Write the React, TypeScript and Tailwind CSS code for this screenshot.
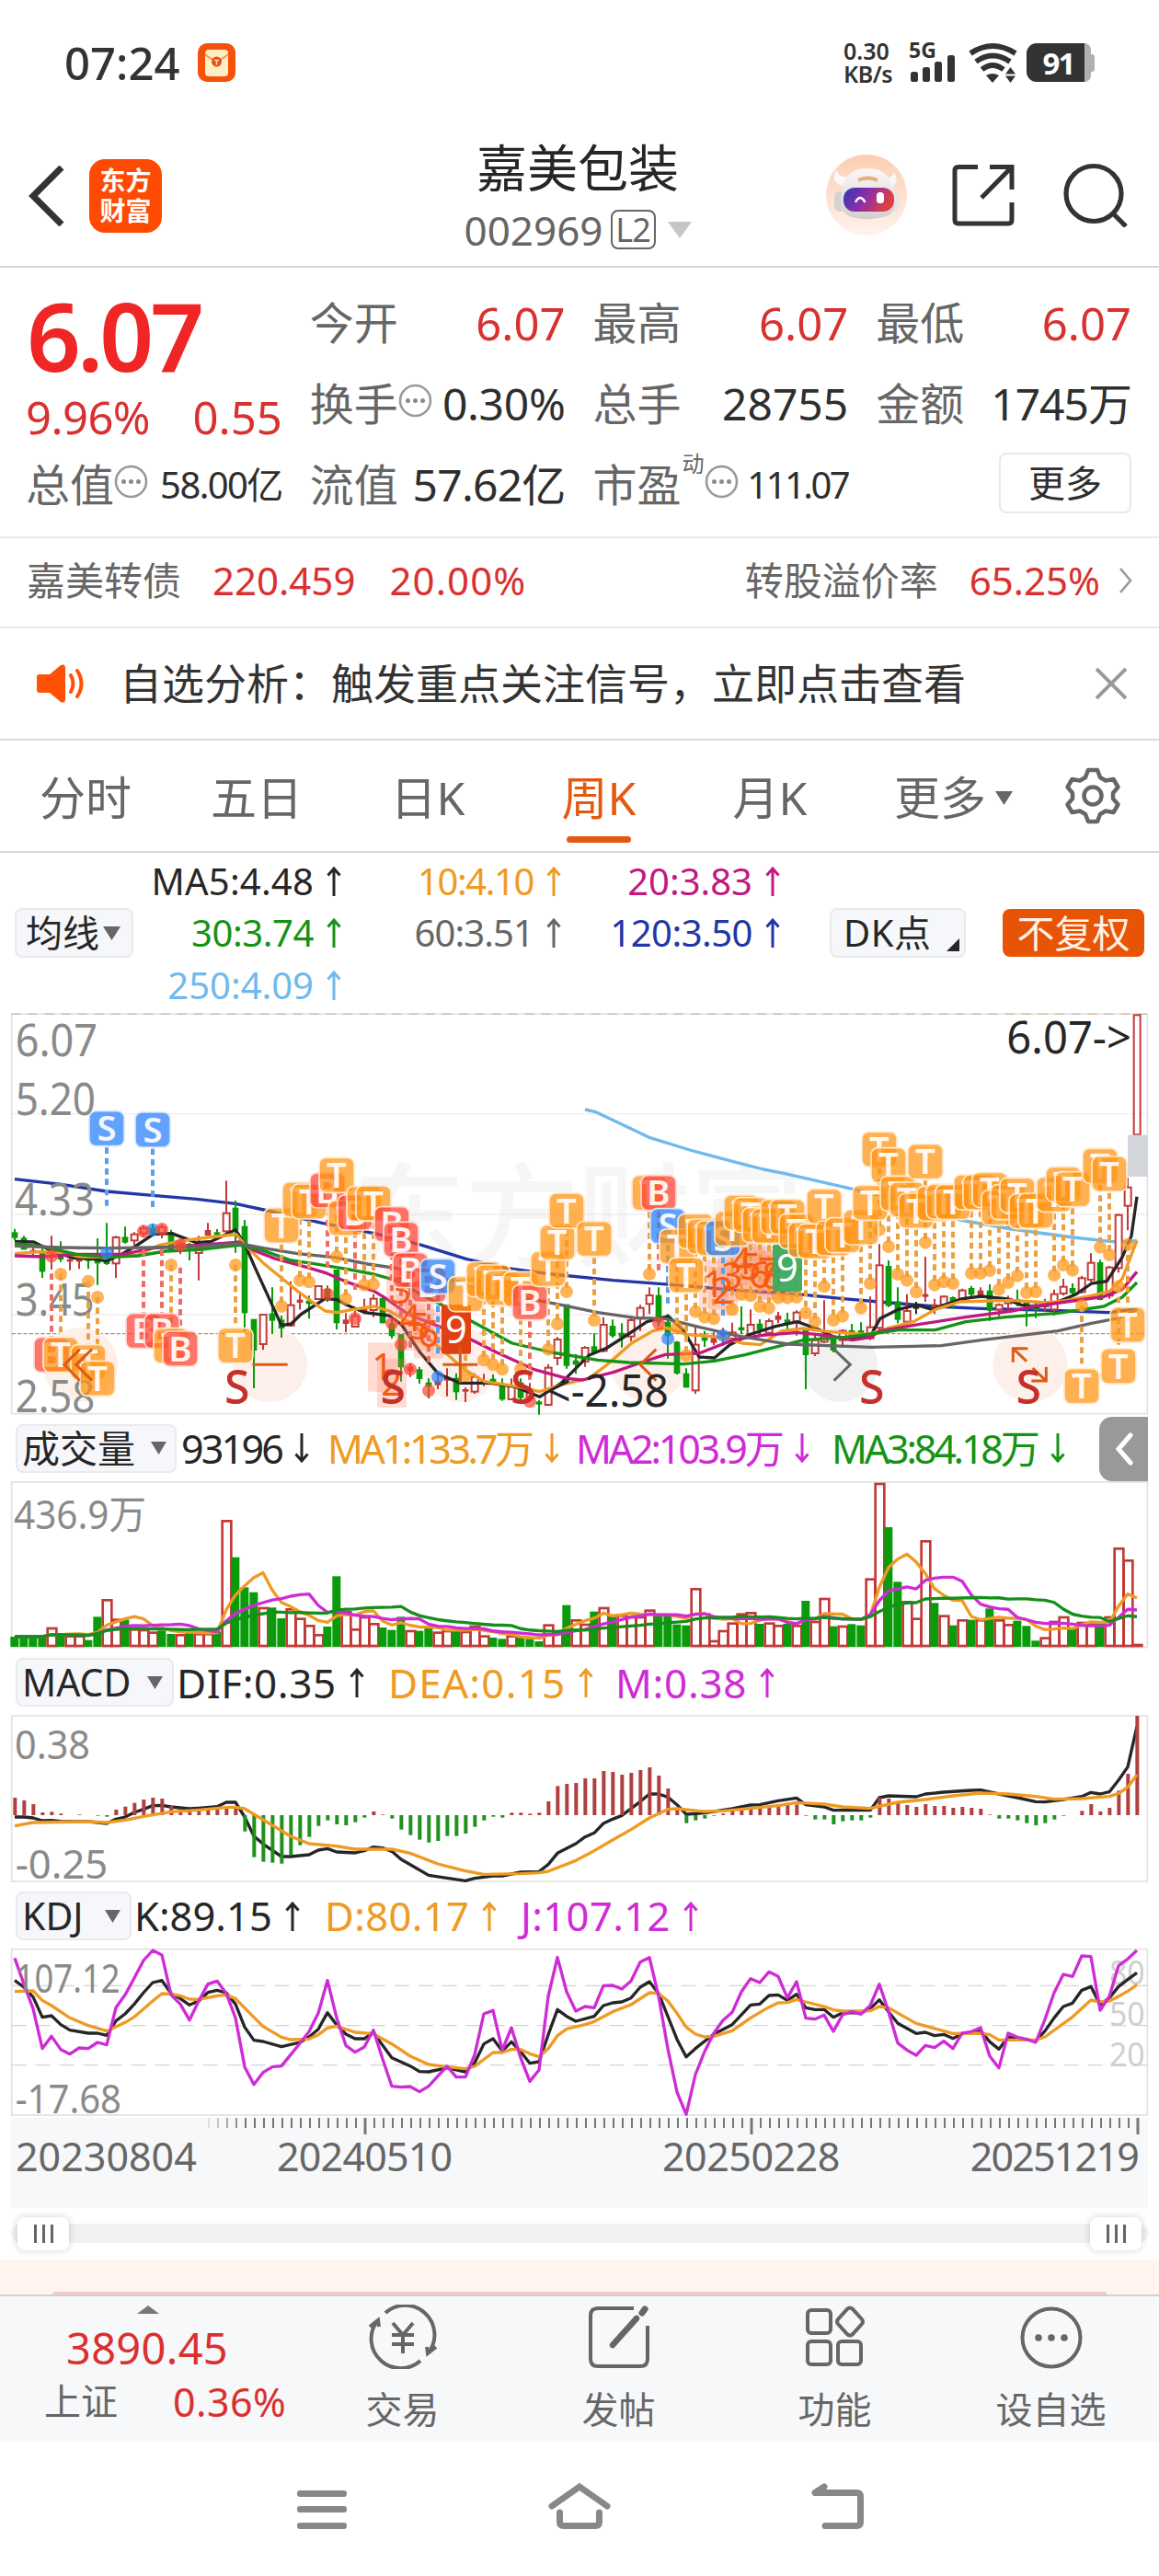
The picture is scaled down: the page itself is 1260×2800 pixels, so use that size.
import type { ReactNode } from "react";
import clsx from "clsx";

type Pt = [number, number];

// Every chart uses 3 units per pixel; one candle is 30 units wide.
const X0 = 48;
const STEP = 30;
const at = (i: number) => X0 + STEP * i;

const RED = "#c23a37";
const GREEN = "#0a9b0a";
const INK = "#262626";
const ORANGE = "#ef9a22";
const PURPLE = "#cf2bd6";

// [high, low, body top, body bottom, colour]
type Candle = [number, number, number, number, string];

const candles: Candle[] = [
  [737, 775, 750, 765, "g"], [760, 805, 768, 803, "g"], [790, 830, 808, 812, "r"], [800, 897, 815, 875, "g"],
  [760, 870, 805, 815, "r"], [778, 845, 820, 835, "g"], [828, 872, 838, 842, "r"], [828, 868, 838, 842, "r"],
  [825, 868, 833, 840, "g"], [768, 920, 835, 848, "g"], [718, 855, 840, 850, "g"], [760, 897, 765, 850, "r"],
  [730, 785, 765, 780, "g"], [748, 790, 755, 775, "r"], [725, 765, 735, 752, "r"], [720, 762, 735, 750, "g"],
  [722, 768, 732, 752, "r"], [740, 812, 750, 810, "g"], [770, 820, 785, 800, "r"], [783, 840, 788, 800, "g"],
  [760, 905, 800, 816, "r"], [718, 760, 743, 757, "r"], [738, 770, 750, 756, "g"], [580, 750, 686, 745, "r"],
  [645, 815, 670, 740, "g"], [708, 1072, 730, 1010, "g"], [1033, 1257, 1033, 1132, "g"], [1015, 1132, 1017, 1113, "r"],
  [928, 1080, 1015, 1035, "g"], [1020, 1092, 1035, 1060, "g"], [908, 1056, 986, 1052, "r"], [950, 1000, 970, 976, "r"],
  [955, 1030, 973, 980, "g"], [922, 968, 924, 966, "r"], [922, 975, 935, 960, "g"], [870, 1065, 872, 1043, "g"],
  [1012, 1074, 1035, 1045, "r"], [1005, 1058, 1022, 1056, "r"], [965, 1015, 1000, 1006, "r"], [950, 1025, 965, 1002, "r"],
  [960, 1045, 965, 1043, "g"], [1030, 1095, 1048, 1085, "g"], [1080, 1235, 1083, 1187, "g"], [1175, 1220, 1188, 1200, "r"],
  [1187, 1242, 1197, 1225, "g"], [1225, 1290, 1240, 1250, "g"], [1205, 1260, 1235, 1245, "r"], [1192, 1283, 1222, 1230, "r"],
  [1208, 1295, 1225, 1268, "g"], [1255, 1302, 1262, 1266, "r"], [1208, 1275, 1220, 1268, "r"], [1210, 1250, 1235, 1240, "r"],
  [1212, 1245, 1228, 1236, "g"], [1225, 1298, 1245, 1292, "g"], [1225, 1295, 1248, 1293, "r"], [1225, 1295, 1240, 1287, "g"],
  [1240, 1300, 1262, 1290, "r"], [1295, 1343, 1302, 1308, "g"], [1178, 1315, 1190, 1311, "r"], [1090, 1182, 1098, 1158, "r"],
  [985, 1193, 985, 1182, "g"], [1145, 1210, 1168, 1178, "g"], [1120, 1187, 1125, 1170, "r"], [1078, 1140, 1122, 1138, "g"],
  [1025, 1140, 1050, 1135, "r"], [1033, 1092, 1055, 1085, "g"], [1045, 1124, 1078, 1088, "g"], [1020, 1103, 1035, 1088, "r"],
  [985, 1070, 995, 1030, "r"], [928, 1015, 954, 982, "r"], [928, 1055, 955, 1040, "g"], [1015, 1160, 1042, 1085, "g"],
  [1103, 1212, 1107, 1207, "g"], [1192, 1255, 1210, 1253, "g"], [1053, 1275, 1115, 1264, "r"], [1070, 1122, 1093, 1100, "g"],
  [1075, 1117, 1095, 1107, "r"], [1060, 1118, 1078, 1092, "r"], [1043, 1105, 1075, 1095, "r"], [990, 1080, 1060, 1066, "g"],
  [1000, 1085, 1050, 1080, "r"], [1032, 1090, 1048, 1065, "g"], [1030, 1082, 1038, 1076, "r"], [1008, 1045, 1022, 1032, "r"],
  [1010, 1065, 1035, 1042, "g"], [1003, 1085, 1010, 1040, "r"], [1068, 1260, 1070, 1147, "g"], [1080, 1152, 1100, 1143, "r"],
  [970, 1110, 1088, 1105, "r"], [1085, 1140, 1097, 1132, "g"], [1065, 1125, 1070, 1100, "r"], [1047, 1090, 1070, 1085, "g"],
  [1042, 1090, 1070, 1085, "g"], [958, 1100, 1058, 1094, "r"], [787, 1065, 856, 1060, "r"], [840, 992, 860, 987, "g"],
  [928, 1045, 975, 1032, "g"], [950, 1060, 1005, 1040, "r"], [975, 1015, 992, 996, "k"], [828, 975, 952, 957, "r"],
  [965, 1015, 985, 992, "r"], [955, 990, 958, 985, "r"], [958, 998, 962, 975, "g"], [932, 975, 938, 965, "r"],
  [923, 958, 932, 950, "g"], [928, 958, 940, 952, "r"], [918, 1037, 940, 1002, "g"], [980, 1022, 985, 1000, "r"],
  [955, 1000, 965, 980, "r"], [935, 990, 968, 980, "g"], [970, 1055, 975, 990, "g"], [972, 1028, 985, 1000, "g"],
  [965, 1005, 975, 990, "r"], [935, 1020, 950, 1000, "r"], [900, 955, 926, 948, "r"], [915, 957, 932, 945, "g"],
  [890, 948, 898, 943, "r"], [817, 910, 848, 903, "r"], [838, 970, 848, 967, "g"], [858, 965, 863, 955, "r"],
  [688, 880, 692, 865, "r"], [570, 742, 602, 662, "r"], [38, 432, 40, 430, "r"],
];

const ma120: Pt[] = [[48, 575], [200, 592], [348, 615], [498, 628], [640, 640], [768, 655], [860, 675], [1050, 718], [1220, 752], [1290, 768], [1375, 790], [1520, 835], [1650, 865], [1800, 885], [2000, 905], [2200, 920], [2400, 937], [2600, 950], [2750, 965], [2900, 978], [3050, 990], [3200, 997], [3400, 1002], [3618, 1010], [3708, 998]];
const ma250: Pt[] = [[1908, 348], [1940, 355], [2010, 388], [2120, 440], [2250, 480], [2400, 520], [2490, 543], [2560, 557], [2770, 605], [2900, 635], [3000, 670], [3130, 708], [3300, 738], [3500, 765], [3620, 778], [3680, 780], [3708, 775]];
const ma60: Pt[] = [[48, 793], [200, 798], [348, 800], [500, 798], [650, 795], [780, 785], [860, 800], [970, 818], [1090, 830], [1200, 852], [1290, 865], [1500, 912], [1700, 960], [1830, 985], [1950, 1010], [2070, 1027], [2170, 1030], [2270, 1055], [2400, 1085], [2520, 1105], [2570, 1113], [2700, 1118], [2840, 1123], [2980, 1120], [3070, 1118], [3200, 1100], [3350, 1082], [3450, 1070], [3560, 1045], [3650, 1028], [3708, 1000]];
const ma30: Pt[] = [[48, 785], [140, 795], [250, 820], [348, 830], [450, 825], [540, 810], [650, 805], [780, 790], [850, 805], [950, 840], [1020, 850], [1130, 868], [1220, 885], [1290, 905], [1380, 955], [1440, 985], [1550, 1045], [1670, 1110], [1800, 1140], [1950, 1165], [2050, 1173], [2230, 1178], [2330, 1168], [2430, 1148], [2500, 1130], [2620, 1100], [2760, 1090], [2840, 1080], [2930, 1067], [3050, 1067], [3150, 1040], [3280, 1025], [3450, 1012], [3530, 1000], [3600, 990], [3660, 960], [3708, 912]];
const ma20: Pt[] = [[48, 825], [140, 828], [250, 820], [400, 820], [500, 800], [650, 790], [780, 780], [830, 808], [900, 835], [1000, 862], [1060, 880], [1130, 910], [1220, 940], [1260, 965], [1330, 1015], [1430, 1055], [1530, 1095], [1620, 1140], [1740, 1195], [1850, 1225], [1900, 1230], [2000, 1205], [2100, 1170], [2170, 1147], [2280, 1143], [2390, 1100], [2480, 1085], [2600, 1075], [2700, 1085], [2780, 1100], [2840, 1090], [2870, 1070], [3000, 1048], [3150, 1025], [3300, 1005], [3370, 990], [3500, 972], [3600, 958], [3660, 935], [3708, 877]];
const ma10: Pt[] = [[48, 818], [130, 812], [200, 815], [260, 828], [350, 830], [450, 822], [520, 790], [600, 775], [680, 765], [770, 755], [800, 790], [860, 850], [970, 940], [1060, 1005], [1100, 1010], [1150, 1000], [1220, 990], [1270, 1005], [1340, 1045], [1440, 1130], [1520, 1200], [1580, 1235], [1680, 1250], [1760, 1268], [1830, 1245], [1920, 1225], [1980, 1180], [2060, 1110], [2130, 1070], [2175, 1060], [2240, 1082], [2350, 1090], [2420, 1110], [2480, 1115], [2550, 1070], [2620, 1062], [2700, 1072], [2830, 1082], [2900, 1060], [2980, 1040], [3050, 1000], [3130, 975], [3300, 970], [3420, 978], [3480, 970], [3560, 955], [3620, 940], [3660, 900], [3708, 775]];
const ma5: Pt[] = [[48, 778], [110, 780], [170, 810], [240, 832], [300, 835], [348, 842], [400, 818], [440, 795], [500, 755], [560, 752], [640, 782], [690, 778], [768, 740], [800, 790], [830, 860], [918, 1052], [950, 1047], [980, 1017], [1060, 965], [1100, 968], [1130, 985], [1190, 1010], [1270, 1020], [1310, 1050], [1370, 1140], [1430, 1210], [1500, 1240], [1600, 1240], [1680, 1252], [1760, 1285], [1830, 1240], [1920, 1150], [1980, 1125], [2050, 1080], [2110, 1040], [2180, 1022], [2230, 1070], [2280, 1155], [2330, 1158], [2380, 1115], [2450, 1080], [2530, 1055], [2600, 1040], [2670, 1065], [2720, 1090], [2800, 1092], [2840, 1085], [2870, 1030], [2930, 1000], [2990, 985], [3040, 1000], [3080, 985], [3140, 965], [3200, 957], [3280, 965], [3330, 985], [3380, 992], [3450, 975], [3510, 950], [3560, 915], [3610, 908], [3660, 830], [3690, 760], [3708, 632]];

// [letter, candle index, badge centre y, dot y]
type Mark = ["T" | "B" | "S", number, number, number];

const marks: Mark[] = [
  ["B", 4, 1148, 826], ["T", 5, 1148, 885], ["T", 8, 1172, 908], ["T", 9, 1225, 960],
  ["S", 10, 410, 815], ["S", 15, 414, 740],
  ["B", 14, 1070, 745], ["B", 16, 1070, 738], ["T", 17, 1118, 855], ["B", 18, 1128, 790],
  ["T", 24, 1118, 855], ["T", 29, 726, 990], ["T", 31, 642, 905], ["T", 32, 648, 910],
  ["B", 34, 612, 950], ["T", 35, 562, 828], ["T", 36, 702, 965], ["B", 37, 684, 1030],
  ["T", 38, 655, 920], ["T", 39, 654, 918], ["B", 41, 722, 1045], ["B", 42, 772, 1115],
  ["B", 43, 872, 1195], ["B", 45, 920, 1265], ["S", 46, 892, 1220], ["T", 49, 950, 1215],
  ["T", 51, 902, 1165], ["T", 52, 912, 1180], ["T", 53, 930, 1195], ["T", 55, 934, 1195],
  ["B", 56, 977, 1300], ["T", 58, 868, 1130], ["T", 59, 782, 1047], ["T", 60, 678, 942],
  ["T", 63, 770, 1035], ["T", 69, 620, 885], ["B", 70, 620, 1045], ["S", 71, 728, 1095],
  ["T", 72, 795, 1060], ["T", 74, 745, 1007], ["T", 75, 762, 1025], ["T", 76, 768, 1030],
  ["S", 77, 768, 1085], ["T", 78, 737, 1000], ["T", 79, 684, 950], ["T", 80, 692, 955],
  ["T", 73, 888, 1150], ["T", 81, 725, 990], ["T", 82, 728, 995], ["T", 83, 698, 962],
  ["T", 84, 698, 962], ["T", 85, 745, 960], ["T", 86, 773, 1012], ["T", 87, 778, 1040],
  ["T", 88, 664, 925], ["T", 89, 768, 1035], ["T", 90, 758, 1022], ["T", 92, 732, 995],
  ["T", 93, 652, 915], ["T", 94, 478, 740], ["T", 95, 530, 795], ["T", 96, 622, 885],
  ["T", 97, 642, 905], ["T", 98, 678, 943], ["T", 99, 518, 782], ["T", 100, 655, 920],
  ["T", 101, 648, 910], ["T", 102, 650, 915], ["T", 104, 618, 882], ["T", 105, 618, 882],
  ["T", 106, 610, 873], ["T", 107, 668, 935], ["T", 108, 650, 912], ["T", 109, 628, 890],
  ["T", 110, 680, 945], ["T", 111, 678, 942], ["T", 113, 625, 888], ["T", 114, 592, 855],
  ["T", 115, 608, 872], ["T", 118, 532, 797], ["T", 119, 558, 822], ["T", 116, 1250, 987],
  ["T", 120, 1185, 925], ["T", 121, 1050, 788],
];

const markFill = { T: "#ff9514", B: "#fd4636", S: "#2d82fb" };
const markDash = { T: "#eba141", B: "#ef6c62", S: "#599fea" };
const markEdge = { T: "#ffe9cb", B: "#ffd8d4", S: "#d5e6ff" };

const counts: [string, number, number][] = [
  ["1", 1248, 1188], ["2", 1278, 1240], ["3", 1308, 940], ["4", 1338, 1030], ["5", 1368, 1055], ["6", 1398, 1080],
  ["1", 2328, 918], ["2", 2358, 940], ["3", 2388, 892], ["4", 2418, 842], ["5", 2448, 862], ["6", 2478, 888], ["7", 2508, 875], ["8", 2520, 890],
];

// bar tops, measured from the top of the panel; the base sits at 750
const volume: [number, string][] = [
  [717, "g"], [717, "g"], [717, "g"], [717, "g"], [686, "r"], [712, "g"], [712, "r"], [712, "r"], [728, "g"], [652, "g"],
  [594, "r"], [658, "r"], [662, "g"], [690, "r"], [692, "r"], [700, "r"], [697, "g"], [708, "g"], [708, "r"], [700, "g"],
  [705, "r"], [705, "r"], [700, "g"], [336, "r"], [458, "g"], [556, "g"], [572, "g"], [620, "r"], [622, "g"], [657, "g"],
  [624, "r"], [655, "r"], [678, "r"], [708, "r"], [684, "g"], [520, "g"], [632, "r"], [690, "r"], [650, "r"], [672, "r"],
  [687, "g"], [695, "g"], [652, "g"], [695, "r"], [698, "g"], [690, "g"], [700, "r"], [695, "r"], [695, "g"], [698, "r"],
  [680, "r"], [712, "r"], [720, "g"], [724, "g"], [712, "r"], [718, "g"], [724, "g"], [732, "g"], [676, "r"], [700, "r"],
  [614, "g"], [660, "r"], [674, "r"], [635, "g"], [620, "r"], [652, "g"], [645, "r"], [650, "r"], [650, "r"], [628, "r"],
  [650, "g"], [650, "g"], [677, "g"], [680, "g"], [558, "r"], [640, "r"], [728, "r"], [695, "r"], [670, "r"], [640, "r"],
  [636, "r"], [675, "g"], [670, "r"], [678, "r"], [675, "g"], [678, "r"], [600, "g"], [665, "r"], [590, "r"], [683, "g"],
  [680, "r"], [676, "g"], [680, "g"], [526, "r"], [215, "r"], [360, "g"], [538, "g"], [600, "r"], [655, "r"], [402, "r"],
  [607, "g"], [646, "r"], [680, "g"], [660, "r"], [662, "g"], [660, "r"], [625, "g"], [660, "r"], [675, "r"], [665, "g"],
  [682, "g"], [730, "g"], [718, "r"], [665, "r"], [650, "r"], [690, "g"], [668, "r"], [670, "r"], [675, "g"], [650, "r"],
  [426, "r"], [465, "r"], [740, "r"],
];

const macd = [
  57, 48, 36, 9, 11, 5, 0, 2, 0, -2, -5, 18, 28, 40, 51, 57, 54, 30, 20, 14, 12, 15, 20, 25, 28, -53, -137, -152, -155, -158,
  -130, -98, -71, -35, -17, -30, -33, -23, -8, 12, 2, -11, -47, -65, -80, -89, -84, -68, -68, -60, -38, -17, -5, -8, 8, 8, 5, 8, 45, 95,
  102, 105, 120, 120, 144, 141, 132, 138, 147, 156, 129, 87, 20, -26, -17, -11, -2, 5, 15, 22, 28, 25, 33, 36, 35, 35, -2, -14, -14, -30,
  -20, -17, -17, -8, 57, 54, 39, 33, 27, 36, 30, 30, 24, 27, 24, 21, 2, -11, -11, -17, -26, -33, -26, -14, -2, 0, 14, 36, 12, 24, 80, 135, 324,
];

const dif: Pt[] = [[0, 375], [1, 375], [2, 378], [3, 387], [4, 386], [5, 389], [8, 390], [10, 396], [11, 382], [12, 375], [13, 360], [14, 350], [15, 338], [16, 337], [17, 342], [19, 348], [20, 346], [22, 341], [23, 327], [24, 327], [25, 375], [26, 437], [27, 463], [29, 504], [30, 504], [32, 498], [33, 483], [34, 478], [35, 489], [37, 492], [38, 485], [39, 473], [40, 476], [41, 487], [42, 513], [45, 565], [47, 574], [49, 583], [50, 575], [52, 567], [53, 567], [55, 555], [57, 553], [58, 530], [59, 493], [61, 462], [62, 440], [63, 427], [64, 396], [65, 382], [66, 370], [68, 325], [69, 300], [70, 300], [71, 310], [72, 335], [73, 366], [75, 362], [78, 348], [80, 336], [81, 335], [83, 322], [85, 313], [86, 335], [88, 342], [89, 353], [92, 352], [93, 353], [94, 312], [95, 306], [98, 309], [99, 300], [101, 294], [104, 288], [105, 287], [107, 300], [109, 312], [111, 325], [112, 326], [114, 318], [116, 308], [117, 295], [118, 300], [119, 293], [120, 255], [121, 212], [122, 80]];
const dea: Pt[] = [[0, 404], [2, 393], [8, 390], [10, 393], [12, 385], [14, 373], [17, 358], [20, 352], [23, 344], [24, 343], [25, 348], [27, 384], [30, 438], [32, 462], [35, 470], [37, 480], [41, 480], [43, 493], [46, 528], [49, 551], [51, 562], [55, 560], [57, 557], [58, 552], [61, 517], [63, 485], [65, 450], [67, 416], [69, 378], [71, 350], [72, 348], [75, 357], [77, 355], [80, 347], [83, 338], [85, 328], [88, 333], [90, 342], [93, 347], [94, 340], [96, 327], [99, 318], [102, 306], [105, 297], [108, 300], [111, 308], [113, 317], [116, 315], [118, 310], [119, 308], [120, 298], [121, 278], [122, 237]];

const kdjJ = [
  835, 920, 1000, 1130, 1090, 1133, 1148, 1128, 1130, 1110, 1118, 997, 955, 900, 843, 810, 825, 955, 985, 1037, 975, 920, 910, 950, 1030,
  1190, 1247, 1208, 1190, 1187, 1150, 1113, 1075, 1015, 908, 1030, 1120, 1142, 1125, 1070, 1165, 1253, 1256, 1254, 1271, 1253, 1220, 1188, 1223, 1223,
  1150, 1017, 1006, 1135, 1062, 1160, 1237, 1200, 960, 833, 945, 1008, 993, 997, 925, 924, 936, 910, 848, 833, 960, 1130, 1272, 1345, 1215,
  1140, 1080, 1038, 1012, 945, 902, 915, 880, 895, 965, 912, 1031, 1034, 1021, 1074, 1020, 1010, 1018, 990, 920, 1010, 1112, 1135, 1152, 1120,
  1127, 1106, 1130, 1080, 1075, 1062, 1155, 1193, 1080, 1093, 1100, 1110, 1035, 948, 888, 895, 828, 830, 1005, 960, 860, 838, 810,
];
const kdjK: Pt[] = [[0, 908], [1, 930], [2, 962], [3, 1028], [4, 1023], [5, 1052], [6, 1070], [8, 1080], [9, 1080], [10, 1087], [11, 1040], [12, 1017], [13, 985], [14, 948], [15, 915], [16, 908], [17, 950], [18, 967], [19, 988], [20, 975], [21, 947], [22, 940], [23, 948], [24, 985], [25, 1060], [26, 1103], [27, 1107], [29, 1124], [31, 1110], [32, 1092], [33, 1067], [34, 1013], [35, 1053], [36, 1083], [37, 1098], [38, 1098], [39, 1078], [40, 1120], [41, 1160], [43, 1187], [44, 1205], [45, 1206], [47, 1193], [49, 1206], [50, 1177], [51, 1115], [52, 1098], [53, 1138], [54, 1108], [55, 1140], [56, 1178], [57, 1173], [58, 1085], [59, 1003], [60, 1025], [61, 1041], [63, 1025], [64, 990], [65, 981], [66, 978], [67, 965], [68, 930], [69, 912], [70, 950], [71, 1025], [72, 1100], [73, 1157], [74, 1130], [76, 1083], [78, 1052], [80, 988], [81, 985], [82, 957], [83, 955], [84, 973], [85, 953], [86, 997], [87, 1003], [88, 1003], [89, 1028], [90, 1013], [92, 1014], [93, 1000], [94, 971], [95, 1010], [96, 1048], [98, 1081], [99, 1077], [100, 1088], [101, 1084], [102, 1097], [103, 1082], [105, 1072], [106, 1108], [107, 1132], [108, 1093], [111, 1105], [112, 1073], [113, 1030], [114, 993], [115, 982], [116, 940], [117, 928], [118, 988], [119, 965], [120, 928], [121, 905], [122, 883]];
const kdjD: Pt[] = [[0, 944], [2, 942], [3, 973], [4, 990], [6, 1030], [8, 1055], [10, 1073], [12, 1045], [13, 1027], [15, 975], [16, 951], [17, 952], [18, 958], [19, 969], [20, 970], [22, 958], [23, 955], [24, 967], [26, 1028], [27, 1058], [29, 1093], [30, 1101], [32, 1099], [33, 1085], [34, 1063], [35, 1057], [37, 1077], [39, 1082], [41, 1115], [43, 1155], [45, 1182], [47, 1190], [49, 1196], [50, 1188], [52, 1143], [53, 1143], [54, 1133], [55, 1133], [56, 1147], [57, 1157], [58, 1130], [59, 1088], [60, 1066], [62, 1052], [63, 1042], [65, 1010], [67, 987], [69, 948], [70, 950], [71, 975], [72, 1015], [73, 1060], [74, 1083], [75, 1092], [76, 1090], [78, 1072], [80, 1030], [82, 995], [83, 981], [84, 980], [85, 970], [86, 978], [88, 993], [89, 1004], [90, 1008], [93, 1007], [94, 993], [95, 997], [98, 1048], [101, 1073], [102, 1081], [105, 1080], [106, 1085], [107, 1102], [111, 1102], [112, 1092], [115, 1027], [117, 972], [118, 978], [119, 975], [120, 960], [121, 943], [122, 922]];

const path = (pts: Pt[]) => pts.map((p) => p.join(",")).join(" ");
const byIndex = (pts: Pt[]) => path(pts.map(([i, y]): Pt => [at(i), y]));

function average(n: number): Pt[] {
  return volume.map(([,], i): Pt => {
    const part = volume.slice(Math.max(0, i - n + 1), i + 1);
    return [i, part.reduce((sum, v) => sum + v[0], 0) / part.length];
  });
}

function Line({ points, color, width = 10 }: { points: string; color: string; width?: number }) {
  return <polyline points={points} fill="none" stroke={color} strokeWidth={width} strokeLinejoin="round" />;
}

function Label({ x, y, w, size = 130, fill = "#8a8a8a", children }: {
  x: number; y: number; w: number; size?: number; fill?: string; children: ReactNode;
}) {
  return (
    <text x={x} y={y} textLength={w} lengthAdjust="spacingAndGlyphs" fontSize={size} fill={fill}>
      {children}
    </text>
  );
}

function PriceChart() {
  return (
    <svg className="block w-full h-[442px] overflow-visible" viewBox="0 24 3780 1326">
      <text x={1150} y={835} textLength={1470} fontSize={370} fontWeight={500} fill="#f6f6f7">东方财富</text>
      <rect x={38} y={36} width={3704} height={1304} fill="none" stroke="#e2e2e2" strokeWidth={5} />
      <line x1={38} x2={3742} y1={37} y2={37} stroke="#cdb9a2" strokeWidth={4} strokeDasharray="30 24" />
      {[362, 690, 1017].map((y) => (
        <line key={y} x1={38} x2={3742} y1={y} y2={y} stroke="#dcdcdc" strokeWidth={4} strokeDasharray="4 5" />
      ))}
      <line x1={38} x2={3742} y1={1079} y2={1079} stroke="#c98a5c" strokeWidth={4} strokeDasharray="13 6" />

      {[262, 880, 1500, 2115, 3360].map((x) => (
        <circle key={x} cx={x} cy={1180} r={122} fill="#fdf0ea" />
      ))}
      <circle cx={2740} cy={1180} r={122} fill="#f1f1f2" />

      <Line points={path(ma120)} color="#2236a8" />
      <Line points={path(ma250)} color="#70b9ec" />

      {candles.map(([high, low, top, bottom, c], i) => {
        const color = c === "g" ? GREEN : c === "k" ? INK : RED;
        const hollow = c === "r" && bottom - top > 14;
        return (
          <g key={i} stroke={color} strokeWidth={6}>
            <line x1={at(i)} x2={at(i)} y1={high} y2={top} />
            <line x1={at(i)} x2={at(i)} y1={bottom} y2={low} />
            <rect
              x={at(i) - (hollow ? 10 : 8)}
              y={top}
              width={hollow ? 21 : 16}
              height={Math.max(bottom - top, 3)}
              fill={hollow ? "#fff" : color}
              strokeWidth={hollow ? 6 : 4}
            />
          </g>
        );
      })}

      <Line points={path(ma5)} color={INK} />
      <Line points={path(ma10)} color={ORANGE} />
      <Line points={path(ma20)} color="#c2187f" />
      <Line points={path(ma30)} color="#149314" />
      <Line points={path(ma60)} color="#666" />

      <Label x={50} y={173} w={268} size={145}>6.07</Label>
      <Label x={50} y={367} w={262} size={145}>5.20</Label>
      <Label x={48} y={694} w={260} size={145}>4.33</Label>
      <Label x={50} y={1020} w={258} size={145}>3.45</Label>
      <Label x={50} y={1335} w={260} size={145}>2.58</Label>

      {counts.map(([n, x, y], k) => (
        <rect key={k} x={x - 48} y={y - 80} width={96} height={160} rx={6} fill="#ff7a5a" opacity={0.26} />
      ))}

      {marks.map(([m, i, y, dot], k) => {
        const down = dot < y;
        return (
          <g key={k}>
            <circle cx={at(i)} cy={dot} r={21} fill={markFill[m]} opacity={0.72} />
            <line
              x1={at(i)}
              x2={at(i)}
              y1={down ? Math.max(dot, y - 265) : y + 62}
              y2={down ? y - 58 : Math.min(dot, y + 265)}
              stroke={markDash[m]}
              strokeWidth={12}
              strokeDasharray="20 14"
            />
          </g>
        );
      })}

      {counts.map(([n, x, y], k) => (
        <text key={k} x={x} y={y + 42} textAnchor="middle" fontSize={122} fill="#f85a14">{n}</text>
      ))}
      <rect x={1440} y={985} width={96} height={160} rx={8} fill="#e04112" />
      <text x={1488} y={1110} textAnchor="middle" fontSize={125} fill="#fff">9</text>
      <rect x={2520} y={788} width={96} height={154} rx={8} fill="#3aaa5c" opacity={0.94} />
      <text x={2568} y={908} textAnchor="middle" fontSize={125} fill="#fff">9</text>

      {marks.map(([m, i, y], k) => (
        <g key={k}>
          <rect
            x={at(i) - 57}
            y={y - 57}
            width={114}
            height={114}
            rx={22}
            fill={markFill[m]}
            fillOpacity={0.74}
            stroke={markEdge[m]}
            strokeWidth={5}
          />
          <text x={at(i)} y={y + 41} textAnchor="middle" fontSize={115} fontWeight={600} fill="#fff" opacity={0.92}>
            {m}
          </text>
        </g>
      ))}

      <g fill="none" stroke="#dc5b16" strokeWidth={9}>
        <path d="M260 1130 L210 1180 L260 1232 M300 1130 L248 1180 L300 1232" />
        <path d="M823 1180 H938" />
        <path d="M1444 1180 H1558 M1501 1123 V1238" />
        <path d="M2140 1130 L2088 1180 L2140 1232" />
        <path d="M2720 1130 L2773 1180 L2720 1232" stroke="#666" />
        <path d="M3304 1172 V1127 H3352 M3306 1129 L3348 1169 M3364 1233 H3412 V1187 M3410 1231 L3368 1191" />
      </g>
      {[773, 1282, 1706, 2843, 3355].map((x) => (
        <text key={x} x={x} y={1306} textAnchor="middle" fontSize={145} fill="#c5302b" stroke="#c5302b" strokeWidth={3}>S</text>
      ))}

      <Label x={3283} y={166} w={407} size={145} fill={INK}>{"6.07->"}</Label>
      <Label x={1783} y={1318} w={398} size={145} fill={INK}>{"<-2.58"}</Label>
      <rect x={3678} y={431} width={64} height={136} fill="#d2d5da" />
    </svg>
  );
}

function VolumeChart() {
  return (
    <svg className="block w-full h-[185px]" viewBox="0 204 3780 555">
      <rect x={38} y={213} width={3704} height={539} fill="none" stroke="#e2e2e2" strokeWidth={5} />
      <Label x={45} y={367} w={432}>436.9万</Label>
      {volume.map(([top, c], i) =>
        c === "g" ? (
          <rect key={i} x={at(i) - 14} y={top} width={27} height={750 - top} fill={GREEN} />
        ) : (
          <rect key={i} x={at(i) - 13} y={top + 4} width={29} height={743 - top} fill="#fff" stroke={RED} strokeWidth={8} />
        ),
      )}
      <Line points={byIndex(average(5))} color={ORANGE} />
      <Line points={byIndex(average(10))} color={PURPLE} />
      <Line points={byIndex(average(20))} color="#148f1a" />
    </svg>
  );
}

function MacdChart() {
  return (
    <svg className="block w-full h-[186px]" viewBox="0 36 3780 558">
      <rect x={38} y={45} width={3704} height={540} fill="none" stroke="#e2e2e2" strokeWidth={5} />
      <Label x={48} y={187} w={246}>0.38</Label>
      <Label x={50} y={577} w={302}>-0.25</Label>
      <Line points={byIndex(dif)} color={INK} />
      {macd.map((v, i) => (
        <rect
          key={i}
          x={at(i) - 5}
          y={v > 0 ? 369 - v : 369}
          width={12}
          height={Math.abs(v)}
          fill={v > 0 ? "#b04040" : "#1f911f"}
        />
      ))}
      <Line points={byIndex(dea)} color={ORANGE} />
    </svg>
  );
}

function KdjChart() {
  return (
    <svg className="block w-full h-[187px]" viewBox="0 795 3780 561">
      <rect x={38} y={806} width={3704} height={541} fill="none" stroke="#e2e2e2" strokeWidth={5} />
      {[925, 1055, 1184].map((y) => (
        <line key={y} x1={38} x2={3742} y1={y} y2={y} stroke="#d4d4d4" strokeWidth={4} strokeDasharray="48 30" />
      ))}
      <Label x={3618} y={922} w={116} size={108} fill="#cfcfcf">80</Label>
      <Label x={3618} y={1056} w={116} size={108} fill="#cfcfcf">50</Label>
      <Label x={3618} y={1187} w={116} size={108} fill="#cfcfcf">20</Label>
      <Line points={byIndex(kdjK)} color={INK} />
      <Line points={byIndex(kdjD)} color={ORANGE} />
      <Line points={byIndex(kdjJ.map((y, i): Pt => [i, y]))} color={PURPLE} />
      <Label x={50} y={948} w={342}>107.12</Label>
      <Label x={50} y={1340} w={346}>-17.68</Label>
    </svg>
  );
}

function TimeAxis() {
  return (
    <div className="mx-3 h-[98px] bg-[#f7f8fa]">
      <svg className="block w-[1236px] h-[18px]" viewBox="12 0 1236 18">
        {Array.from({ length: 102 }, (_, k) => k + 21).map((i) => {
          const major = i === 38 || i === 80 || i === 122;
          return (
            <rect
              key={i}
              x={15.5 + 10 * i + (major ? 0 : 0.5)}
              y={0}
              width={major ? 3 : 2}
              height={major ? 18 : 11}
              fill="#777"
              opacity={Math.min(1, (i - 20) / 5)}
            />
          );
        })}
      </svg>
      <div className="relative h-[48px] text-[43px] leading-[48px] text-[#666] whitespace-nowrap">
        <span className="absolute left-[5px]">20230804</span>
        <span className="absolute left-[289px] tracking-[-0.8px]">20240510</span>
        <span className="absolute left-[708px] tracking-[-0.5px]">20250228</span>
        <span className="absolute right-[11px] tracking-[-1.8px]">20251219</span>
      </div>
    </div>
  );
}

function Arrow({ down }: { down?: boolean }) {
  return (
    <svg className={clsx("w-4 h-[34px] shrink-0", down && "rotate-180")} viewBox="0 0 16 34" fill="none" stroke="currentColor" strokeWidth="3">
      <path d="M8 33 V3 M1.5 10.5 L8 3 L14.5 10.5" />
    </svg>
  );
}

function Caret({ className }: { className?: string }) {
  return (
    <svg className={clsx("shrink-0", className)} viewBox="0 0 18 15" preserveAspectRatio="none" fill="currentColor">
      <path d="M0 0 H18 L9 15 Z" />
    </svg>
  );
}

function Pill({ className, children }: { className?: string; children: ReactNode }) {
  return (
    <div className={clsx("flex items-center shrink-0 rounded-lg border-2 border-[#e9eaed] bg-[#f6f7fa] text-[#262626] whitespace-nowrap", className)}>
      {children}
    </div>
  );
}

function Ma({ className, children }: { className: string; children: ReactNode }) {
  return (
    <div className={clsx("flex items-center justify-end gap-[14px] h-[56.5px] text-[40px] leading-none whitespace-nowrap", className)}>
      <span>{children}</span>
      <Arrow />
    </div>
  );
}

function Reading({ className, down, children }: { className: string; down?: boolean; children: ReactNode }) {
  return (
    <div className={clsx("flex items-center gap-[14px] shrink-0 leading-none whitespace-nowrap", className)}>
      <span>{children}</span>
      <Arrow down={down} />
    </div>
  );
}

function InfoDot() {
  return (
    <svg className="w-[37px] h-[37px] shrink-0" viewBox="0 0 37 37">
      <circle cx="18.5" cy="18.5" r="16.5" fill="none" stroke="#9a9a9a" strokeWidth="2.6" />
      <g fill="#8a8a8a">
        <circle cx="10.5" cy="18.5" r="2.5" />
        <circle cx="18.5" cy="18.5" r="2.5" />
        <circle cx="26.5" cy="18.5" r="2.5" />
      </g>
    </svg>
  );
}

function Quote({ label, info, sup, red, small, className, children }: {
  label: string; info?: boolean; sup?: string; red?: boolean; small?: boolean; className?: string; children: ReactNode;
}) {
  return (
    <div className="flex items-center h-[88px] text-[48px] leading-none whitespace-nowrap">
      <span className="-ml-px text-[#666]">{label}</span>
      {sup && <span className="text-[24px] text-[#666] self-start mt-[9px] ml-px">{sup}</span>}
      {info && <span className="-mt-2"><InfoDot /></span>}
      <span className={clsx("ml-auto", red ? "text-[49px] text-[#d93030]" : "text-[#2e2e2e]", small && "text-[40px]", className)}>{children}</span>
    </div>
  );
}

function StatusBar() {
  return (
    <div className="flex items-center h-[136px] pl-[70px] text-[#333]">
      <span className="w-[123px] text-[49px] leading-none font-medium">07:24</span>
      <svg className="w-[41px] h-[42px] ml-[22px]" viewBox="0 0 41 42">
        <rect width="41" height="42" rx="10" fill="#f4510b" />
        <rect x="8" y="7" width="25" height="29" rx="4" fill="#ffedc4" />
        <path d="M8 12 Q20 24 33 12" fill="none" stroke="#f0a050" strokeWidth="2" />
        <circle cx="20.5" cy="20" r="5.5" fill="#e8501a" />
        <path d="M18 18.5 H23 M20.5 18.5 V23.5" stroke="#ffd9a0" strokeWidth="1.6" />
      </svg>
      <div className="ml-auto mr-[18px] text-[25px] leading-[25px] font-semibold whitespace-nowrap">
        <div>0.30</div>
        <div className="tracking-[-0.5px]">KB/s</div>
      </div>
      <svg className="w-[52px] h-[44px] mr-[13px] overflow-visible" viewBox="0 0 52 44" fill="#333">
        <text x="0" y="17" fontSize="23" fontWeight="700">5G</text>
        <rect x="2" y="32" width="8" height="11" rx="2.500" />
        <rect x="15" y="27" width="8" height="16" rx="2.500" />
        <rect x="28" y="21" width="8" height="22" rx="2.500" />
        <rect x="42" y="14" width="8" height="29" rx="2.500" />
      </svg>
      <svg className="w-[53px] h-[43px] mr-[10px]" viewBox="0 0 53 43" fill="none" stroke="#333" strokeWidth="5.800">
        <path d="M2 11 Q26 -5 51 11" />
        <path d="M8 20 Q26 7 45 20" />
        <path d="M14.500 28.500 Q26 19.500 38 28.500" />
        <path d="M19 35 Q26 31 33 35 L26 43 Z" fill="#333" stroke="none" />
        <path d="M40 33.500 L45.500 26 L51 33.500 Z M40 35.500 L45.500 43 L51 35.500 Z" fill="#333" stroke="none" />
      </svg>
      <div className="flex items-center mr-[70px]">
        <div className="flex items-center justify-center w-[63px] h-[42px] pl-[6px] rounded-l-[11px] bg-[#333] text-white text-[33px] leading-none font-bold tracking-[-2px]">
          91
        </div>
        <div className="w-[7px] h-[42px] bg-[#b0b0b0] rounded-r-[7px]" />
        <div className="w-[4px] h-[19px] bg-[#b0b0b0] rounded-r-[3px]" />
      </div>
    </div>
  );
}

function Robot() {
  return (
    <svg className="w-[88px] h-[88px]" viewBox="0 0 88 88">
      <defs>
        <linearGradient id="halo" x1="0" y1="0" x2="0" y2="1">
          <stop offset="0" stopColor="#fdcdb2" />
          <stop offset="1" stopColor="#fff3ee" />
        </linearGradient>
        <linearGradient id="shell" x1="0" y1="0" x2="0" y2="1">
          <stop offset="0" stopColor="#fbf9f8" />
          <stop offset="1" stopColor="#d3cfce" />
        </linearGradient>
        <linearGradient id="visor" x1="0" y1="0" x2="1" y2="0.3">
          <stop offset="0" stopColor="#3038b4" />
          <stop offset="0.5" stopColor="#8a2fa8" />
          <stop offset="1" stopColor="#de3f45" />
        </linearGradient>
      </defs>
      <circle cx="44" cy="44" r="44" fill="url(#halo)" />
      <path d="M24 34 Q10 34 9 26 Q8 20 12 17 Q13 24 20 24 Q24 25 26 28 Z M64 30 Q66 25 70 24 Q74 23 73 19 Q78 24 76 30 Q73 36 66 36 Z" fill="#faf7f6" />
      <rect x="9" y="40" width="12" height="22" rx="6" fill="#d6d2d0" />
      <rect x="68" y="40" width="12" height="22" rx="6" fill="#e9e4e2" />
      <path d="M23 24 Q30 15 45 15 Q61 15 67 24 Q75 36 75 50 Q76 64 66 67 Q46 73 28 68 Q17 65 16 52 Q16 35 23 24 Z" fill="url(#shell)" />
      <rect x="19" y="36" width="55" height="26" rx="12" fill="url(#visor)" />
      <path d="M32.500 51 Q37 43 42 51" fill="none" stroke="#fff" strokeWidth="2.400" strokeLinecap="round" />
      <rect x="55" y="41" width="8" height="12" rx="3.500" fill="#fff" />
      <path d="M35 28 Q45 23 56 28" fill="none" stroke="#e6ae7c" strokeWidth="4" />
    </svg>
  );
}

function Header() {
  return (
    <header className="flex items-center h-[155px] border-b-2 border-[#d4d7d9]">
      <svg className="w-[40px] h-[66px] ml-[31px]" viewBox="0 0 40 66" fill="none" stroke="#333" strokeWidth="7">
        <path d="M36 2 L5 33 L36 64" />
      </svg>
      <div className="flex flex-col items-center justify-center w-[79px] h-[80px] ml-[26px] rounded-[17px] bg-[#ff4a04] text-white text-[28px] leading-[33px] font-bold">
        <span>东方</span>
        <span>财富</span>
      </div>
      <div className="flex flex-col items-center w-[260px] ml-[322px] pt-[9px] text-[#262626]">
        <h1 className="text-[55px] leading-[62px]">嘉美包装</h1>
        <div className="flex items-center h-[68px] mt-[3px]">
          <span className="text-[44px] leading-none text-[#666]">002969</span>
          <span className="flex items-center justify-center w-[49px] h-[43px] ml-2 border-2 border-[#666] rounded-lg text-[36px] leading-none text-[#666] tracking-[-1px]">
            L2
          </span>
          <Caret className="w-[26px] h-[18px] ml-[13px] text-[#c6c6c6]" />
        </div>
      </div>
      <div className="flex items-center ml-auto mr-[34px] pb-[2px]">
        <Robot />
        <svg className="w-[70px] h-[70px] ml-[48px]" viewBox="0 0 70 70" fill="none" stroke="#333" strokeWidth="5">
          <path d="M29 4.500 H8 Q4 4.500 4 8.500 V62 Q4 66 8 66 H62 Q66 66 66 62 V43" />
          <path d="M42 4.500 H66 V29 M66 4.500 L33 38" />
        </svg>
        <svg className="w-[70px] h-[70px] ml-[52px]" viewBox="0 0 70 70" fill="none" stroke="#333" strokeWidth="5.200">
          <circle cx="33" cy="33.500" r="30" />
          <path d="M54 55 L68 69" />
        </svg>
      </div>
    </header>
  );
}

function QuotePanel() {
  return (
    <section className="grid grid-cols-4 gap-[31px] h-[294px] px-[30px] pt-4 border-b-2 border-[#ebebeb]">
      <div className="-ml-px">
        <div className="h-[118px] text-[103px] leading-[114px] font-semibold tracking-[-4px] text-[#f02525]">6.07</div>
        <div className="flex justify-between items-center h-[56px] mb-[2px] text-[49px] leading-none text-[#d93030]">
          <span className="-ml-px tracking-[-0.6px]">9.96%</span>
          <span>0.55</span>
        </div>
        <Quote label="总值" info small className="tracking-[-1.6px]">58.00亿</Quote>
      </div>
      <div>
        <Quote label="今开" red>6.07</Quote>
        <Quote label="换手" info className="tracking-[-0.3px]">0.30%</Quote>
        <Quote label="流值" className="tracking-[-0.8px]">57.62亿</Quote>
      </div>
      <div>
        <Quote label="最高" red>6.07</Quote>
        <Quote label="总手">28755</Quote>
        <Quote label="市盈" sup="动" info small className="tracking-[-2.5px]">111.07</Quote>
      </div>
      <div>
        <Quote label="最低" red>6.07</Quote>
        <Quote label="金额" className="tracking-[-1px]">1745万</Quote>
        <div className="flex items-center h-[84px]">
          <button className="ml-auto w-[144px] h-[66px] border-2 border-[#e6e8ea] rounded-lg text-[40px] leading-none text-[#2e2e2e]">更多</button>
        </div>
      </div>
    </section>
  );
}

function BondRow() {
  return (
    <section className="flex items-center h-[98px] px-[29px] pb-1 border-b-2 border-[#ebebeb] text-[42px] leading-none text-[#d93030] whitespace-nowrap">
      <span className="text-[#666]">嘉美转债</span>
      <span className="ml-[34px]">220.459</span>
      <span className="ml-[37px] tracking-[1.1px]">20.00%</span>
      <span className="ml-auto text-[#666]">转股溢价率</span>
      <span className="ml-[34px]">65.25%</span>
      <svg className="w-[14px] h-[28px] ml-[21px]" viewBox="0 0 14 28" fill="none" stroke="#999" strokeWidth="2.600">
        <path d="M1 1 L12 14 L1 27" />
      </svg>
    </section>
  );
}

function Notice() {
  return (
    <section className="flex items-center h-[122px] pl-[40px] pr-[35px] border-b-2 border-[#dcdcdc]">
      <svg className="w-[52px] h-[42px]" viewBox="0 0 52 42" fill="#ff5206">
        <path d="M3 11 H14 L26 1 Q31 -1 31 4 V38 Q31 43 26 41 L14 31 H3 Q0 31 0 28 V14 Q0 11 3 11 Z" />
        <path d="M37 12 Q42 21 37 30 M44 7 Q53 21 44 35" fill="none" stroke="#ff5206" strokeWidth="4" strokeLinecap="round" />
      </svg>
      <span className="ml-[38px] -mt-[2px] text-[46px] leading-none text-[#333] whitespace-nowrap">自选分析：触发重点关注信号，立即点击查看</span>
      <svg className="w-[34px] h-[34px] ml-auto" viewBox="0 0 34 34" stroke="#999" strokeWidth="4">
        <path d="M1 1 L33 33 M33 1 L1 33" />
      </svg>
    </section>
  );
}

function Tabs() {
  return (
    <nav className="flex items-center h-[122px] pt-[4px] border-b-2 border-[#d6d6d6] text-[50px] leading-none text-[#666]">
      {["分时", "五日", "日K", "周K", "月K"].map((tab) => (
        <div key={tab} className={clsx("relative flex justify-center w-[186px]", tab === "周K" && "text-[#e3590f]")}>
          {tab}
          {tab === "周K" && <span className="absolute top-[67px] w-[70px] h-[7px] rounded-full bg-[#e3590f]" />}
        </div>
      ))}
      <span className="ml-[42px]">更多</span>
      <Caret className="w-[19px] h-[15px] ml-[10px]" />
      <svg className="w-[62px] h-[62px] -mt-[4px] ml-auto mr-[41px]" viewBox="0 0 62 62" fill="none" stroke="#666" strokeWidth="4.500" strokeLinejoin="round">
        <path d="M26 3 H36 L39 11 L45 14.500 L53.500 13 L58.500 21.500 L53 28 V34 L58.500 40.500 L53.500 49 L45 47.500 L39 51 L36 59 H26 L23 51 L17 47.500 L8.500 49 L3.500 40.500 L9 34 V28 L3.500 21.500 L8.500 13 L17 14.500 L23 11 Z" />
        <circle cx="31" cy="31" r="9.500" />
      </svg>
    </nav>
  );
}

function MaLegend() {
  return (
    <section className="flex items-center h-[171px] pl-4 pt-[3px]">
      <Pill className="w-[129px] h-[54px] pl-[10px] text-[40px] leading-none">
        均线
        <Caret className="w-[19px] h-[15px] ml-[4px] text-[#666]" />
      </Pill>
      <div className="grid grid-cols-[226px_239px_238px]">
        <Ma className="tracking-[0.2px] text-[#262626]">MA5:4.48</Ma>
        <Ma className="tracking-[-1.4px] text-[#ef9a22]">10:4.10</Ma>
        <Ma className="text-[#c2187f]">20:3.83</Ma>
        <Ma className="tracking-[-0.4px] text-[#149314]">30:3.74</Ma>
        <Ma className="tracking-[-0.9px] text-[#666]">60:3.51</Ma>
        <Ma className="tracking-[-0.5px] text-[#2236a8]">120:3.50</Ma>
        <Ma className="text-[#70b9ec]">250:4.09</Ma>
      </div>
      <Pill className="relative w-[148px] h-[54px] ml-[54px] pl-[13px] text-[40px] leading-none tracking-[0.5px]">
        DK点
        <svg className="absolute right-[5px] bottom-[5px] w-[14px] h-[14px]" viewBox="0 0 14 14" fill="#262626">
          <path d="M14 0 V14 H0 Z" />
        </svg>
      </Pill>
      <div className="flex items-center justify-center w-[154px] h-[52px] ml-10 rounded-lg bg-[#e85405] text-[#fff3e6] text-[41px] leading-none">不复权</div>
    </section>
  );
}

function Handle({ className }: { className: string }) {
  return (
    <div className={clsx("absolute top-[10px] flex items-center justify-center gap-[6px] w-[56px] h-[36px] rounded-lg bg-white shadow-[0_0_8px_rgba(0,0,0,0.18)]", className)}>
      <span className="w-[3px] h-[20px] bg-[#666]" />
      <span className="w-[3px] h-[20px] bg-[#666]" />
      <span className="w-[3px] h-[20px] bg-[#666]" />
    </div>
  );
}

function Action({ label, children }: { label: string; children: ReactNode }) {
  return (
    <div className="flex flex-col items-center w-[235px] pt-[9px]">
      <svg className="w-[76px] h-[70px]" viewBox="0 0 76 70" fill="none" stroke="#666" strokeWidth="4">
        {children}
      </svg>
      <span className="mt-[23px] text-[40px] leading-[42px] text-[#666]">{label}</span>
    </div>
  );
}

function BottomBar() {
  return (
    <footer className="flex h-[160px] border-t-2 border-[#cfd1d3] bg-[#f7f8fa]">
      <div className="w-[320px]">
        <svg className="block w-[24px] h-[9px] mt-[10px] ml-[149px]" viewBox="0 0 24 9" fill="#777">
          <path d="M12 0 L24 9 H0 Z" />
        </svg>
        <div className="mt-[12px] ml-[72px] text-[47px] leading-[50px] tracking-[0.3px] text-[#d93030]">3890.45</div>
        <div className="flex items-center h-[40px] mt-[13px] ml-[48px] leading-none whitespace-nowrap">
          <span className="text-[40px] text-[#666]">上证</span>
          <span className="ml-[60px] text-[43px] tracking-[0.4px] text-[#d93030]">0.36%</span>
        </div>
      </div>
      <Action label="交易">
        <path d="M19 9 A32 32 0 0 1 66 52 M57 61 A32 32 0 0 1 10 18" />
        <path d="M2 24 L11 17 L12 24 M74 46 L65 53 L64 46" />
        <path d="M27 20 L38 33 L49 20 M38 33 V53 M26 33 H50 M26 43 H50" />
      </Action>
      <Action label="发帖">
        <path d="M54 4 H15 Q7 4 7 12 V59 Q7 67 15 67 H61 Q69 67 69 59 V23" />
        <path d="M31 44 L57 15" strokeWidth="6.500" strokeLinecap="round" />
        <path d="M63 9 L66 5" strokeWidth="7" strokeLinecap="round" />
      </Action>
      <Action label="功能">
        <rect x="8" y="6" width="25" height="25" rx="4" />
        <rect x="8" y="40" width="25" height="25" rx="4" />
        <rect x="41" y="40" width="25" height="25" rx="4" />
        <path d="M51 5 Q54 2 57 5 L67 16 Q69 18.500 67 21 L57 32 Q54 35 51 32 L41 21 Q39 18.500 41 16 Z" />
      </Action>
      <Action label="设自选">
        <circle cx="38" cy="36" r="31.500" />
        <g fill="#666" stroke="none">
          <circle cx="24" cy="36" r="3.800" />
          <circle cx="38" cy="36" r="3.800" />
          <circle cx="52" cy="36" r="3.800" />
        </g>
      </Action>
    </footer>
  );
}

function SystemNav() {
  return (
    <div className="flex items-center h-[146px] pl-[323px] pb-[6px] text-[#888]">
      <svg className="w-[54px] h-[50px] mt-[2px]" viewBox="0 0 54 50" fill="currentColor">
        <rect y="7" width="54" height="7" rx="3" />
        <rect y="24" width="54" height="7" rx="3" />
        <rect y="42" width="54" height="7" rx="3" />
      </svg>
      <svg className="w-[68px] h-[52px] ml-[219px]" viewBox="0 0 68 52" fill="none" stroke="currentColor" strokeWidth="7" strokeLinecap="round">
        <path d="M4 26 L34 5 L64 26" />
        <path d="M12.500 33 V43 Q12.500 47.500 17 47.500 H51 Q55.500 47.500 55.500 43 V33" />
      </svg>
      <svg className="w-[58px] h-[52px] ml-[218px]" viewBox="0 0 58 52" fill="none" stroke="currentColor" strokeWidth="7" strokeLinecap="round">
        <path d="M14 5 L4 11.500 H49 Q53.500 11.500 53.500 16 V43 Q53.500 47.500 49 47.500 H15" strokeLinejoin="round" />
      </svg>
    </div>
  );
}

export default function App() {
  return (
    <div className="w-[1260px] h-[2800px] overflow-hidden bg-white font-['Noto_Sans','Noto_Sans_CJK_SC',sans-serif]">
      <StatusBar />
      <Header />
      <QuotePanel />
      <BondRow />
      <Notice />
      <Tabs />
      <MaLegend />

      <PriceChart />

      <div className="flex items-center h-[68px] pl-[17px] text-[43px]">
        <Pill className="w-[175px] h-[53px] pl-[5px] text-[41px] leading-none">
          成交量
          <Caret className="w-[17px] h-[14px] ml-[17px] text-[#666]" />
        </Pill>
        <Reading className="w-[159px] ml-[5px] tracking-[-2.8px] text-[#262626]" down>93196</Reading>
        <Reading className="w-[270px] tracking-[-3.4px] text-[#ef9a22]" down>MA1:133.7万</Reading>
        <Reading className="w-[278px] tracking-[-3.2px] text-[#cf2bd6]" down>MA2:103.9万</Reading>
        <Reading className="tracking-[-3.2px] text-[#149314]" down>MA3:84.18万</Reading>
        <div className="flex items-center justify-center self-start shrink-0 w-[53px] h-[70px] ml-auto mr-3 rounded-l-[14px] bg-[#999]">
          <svg className="w-[20px] h-[36px]" viewBox="0 0 20 36" fill="none" stroke="#fff" strokeWidth="5" strokeLinecap="round">
            <path d="M17 3 L4 18 L17 33" />
          </svg>
        </div>
      </div>
      <VolumeChart />

      <div className="flex items-center h-[69px] pl-[17px] pt-[2px] text-[44px]">
        <Pill className="w-[172px] h-[53px] pl-[5px] text-[41px] leading-none">
          MACD
          <Caret className="w-[17px] h-[14px] ml-[18px] text-[#666]" />
        </Pill>
        <Reading className="w-[230px] ml-[3px] tracking-[0.6px] text-[#262626]">DIF:0.35</Reading>
        <Reading className="w-[247px] tracking-[1.2px] text-[#ef9a22]">DEA:0.15</Reading>
        <Reading className="tracking-[0.7px] text-[#cf2bd6]">M:0.38</Reading>
      </div>
      <MacdChart />

      <div className="flex items-center h-[67px] pl-[17px] pt-[2px] text-[43.500px]">
        <Pill className="w-[126px] h-[53px] pl-[5px] text-[41px] leading-none">
          KDJ
          <Caret className="w-[17px] h-[14px] ml-[23px] text-[#666]" />
        </Pill>
        <Reading className="w-[207px] ml-[3px] text-[#262626]">K:89.15</Reading>
        <Reading className="w-[213px] tracking-[0.4px] text-[#ef9a22]">D:80.17</Reading>
        <Reading className="tracking-[0.4px] text-[#cf2bd6]">J:107.12</Reading>
      </div>
      <KdjChart />
      <TimeAxis />

      <div className="relative h-[56px] mx-3 pt-[17px]">
        <div className="h-[21px] rounded-full bg-[#f1f1f4]" />
        <Handle className="left-[7px]" />
        <Handle className="right-[7px]" />
      </div>
      <div className="flex flex-col justify-end h-[38px] px-[57px] bg-[#fff4ee]">
        <div className="h-[3px] rounded-t-full bg-[#f2c9c0]" />
      </div>
      <BottomBar />
      <SystemNav />
    </div>
  );
}
